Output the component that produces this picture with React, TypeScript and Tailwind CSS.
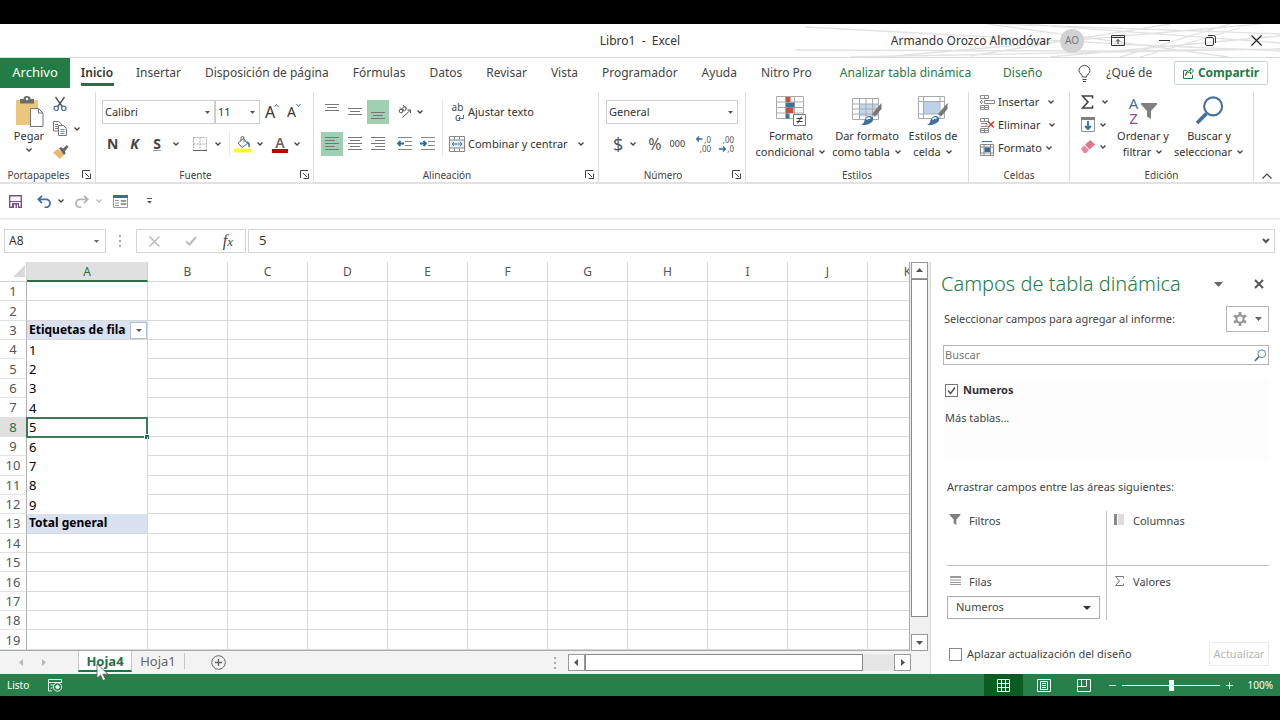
import React, { useState } from 'react';
import clsx from 'clsx';

type IconProps = { className?: string };

const TABS = ['Insertar', 'Disposición de página', 'Fórmulas', 'Datos', 'Revisar', 'Vista', 'Programador', 'Ayuda', 'Nitro Pro'];
const COLUMNS = ['B', 'C', 'D', 'E', 'F', 'G', 'H', 'I', 'J', 'K'];
const ROWS = Array.from({ length: 19 }, (_, i) => i + 1);
const CELLS: Record<number, string> = {
  3: 'Etiquetas de fila', 4: '1', 5: '2', 6: '3', 7: '4', 8: '5', 9: '6', 10: '7', 11: '8', 12: '9', 13: 'Total general',
};

/* ---------- small glyphs ---------- */

function Chevron({ className = 'text-[#444]' }: IconProps) {
  return (
    <svg className={clsx('inline-block h-[6px] w-[8px] shrink-0', className)} viewBox="0 0 8 6" fill="none" stroke="currentColor" strokeWidth="1.3">
      <path d="M1.5 1.5 4 4l2.5-2.5" />
    </svg>
  );
}

function Caret({ className }: IconProps) {
  return (
    <svg className={clsx('shrink-0', className)} viewBox="0 0 8 4" fill="currentColor" preserveAspectRatio="none">
      <path d="M0 0h8L4 4z" />
    </svg>
  );
}

function Launcher() {
  return (
    <button aria-label="Más opciones" className="absolute right-1 bottom-[3px]">
      <svg className="h-[9px] w-[9px]" viewBox="0 0 9 9" fill="none" stroke="#444">
        <path d="M.5 8V.5H8M3 3l4 4M8.5 3.5v5h-5M4.5 8.5h4v-4" />
      </svg>
    </button>
  );
}

function Lines({ rows }: { rows: [number, number, number][] }) {
  return (
    <svg className="h-[18px] w-[16px]" viewBox="0 0 16 18" stroke="#777" fill="none">
      {rows.map(([x, y, w]) => (
        <path key={y} d={`M${x} ${y + 0.5}h${w}`} />
      ))}
    </svg>
  );
}

function Indent({ flip = false }: { flip?: boolean }) {
  return (
    <svg className="h-[14px] w-[16px]" viewBox="0 0 16 14" fill="none" stroke="#888">
      <path d="M1 .5h14M8 4.5h7M8 8.5h7M1 12.5h14" />
      {flip
        ? <path d="M0 6.5h6M3.5 4 6 6.5 3.5 9" stroke="#2e6da4" strokeWidth="1.8" />
        : <path d="M7 6.5H1M3.5 4 1 6.5 3.5 9" stroke="#2e6da4" strokeWidth="1.8" />}
    </svg>
  );
}

function PasteIcon() {
  return (
    <svg className="h-[32px] w-[29px]" viewBox="0 0 29 32" fill="none">
      <path d="M1 4h22v25H1z" fill="#ebc67f" />
      <path d="M5 3h3.5a3.500 3 0 0 1 7 0H19v4.500H5z" fill="#6d6d6d" />
      <circle cx="12" cy="3" r="1.200" fill="#fff" />
      <path d="M15.500 12.500h8l4.500 4.500v13.500H15.500z" fill="#fff" stroke="#777" />
      <path d="M23.500 12.500V17H28" stroke="#777" />
    </svg>
  );
}

function ScissorsIcon() {
  return (
    <svg className="h-[16px] w-[14px]" viewBox="0 0 14 16" fill="none">
      <path d="M2.500 1 9.500 11M11.500 1 4.500 11" stroke="#555" strokeWidth="1.400" />
      <circle cx="3.200" cy="12.300" r="2.200" stroke="#41719c" strokeWidth="1.200" />
      <circle cx="10.800" cy="12.300" r="2.200" stroke="#41719c" strokeWidth="1.200" />
    </svg>
  );
}

function CopyIcon() {
  return (
    <svg className="h-[15px] w-[14px]" viewBox="0 0 14 15" fill="#fff" stroke="#777">
      <path d="M.5.5h5L8.500 3v7h-8z" />
      <path d="M2 3.500h3M2 5.500h3M2 7.500h3" />
      <path d="M5.500 4.500h5l3 3v7h-8z" />
      <path d="M7.500 8.500h4M7.500 10.500h4M7.500 12.500h4" stroke="#7193b3" />
    </svg>
  );
}

function BrushIcon() {
  return (
    <svg className="h-[14px] w-[16px]" viewBox="0 0 16 14">
      <path d="M0 7.500 5 4l6 5.500-4 4.500z" fill="#ebb669" />
      <path d="M6 3.500 8 2l2 1.500 4-3.500 1.500 2-3.500 4 .5 2.500-1.500 1.500z" fill="#666" />
    </svg>
  );
}

function BordersIcon() {
  return (
    <svg className="h-[14px] w-[14px]" viewBox="0 0 14 14" fill="none" stroke="#aaa">
      <path d="M.5.5h13v13M.5.5v13M7 .5v13M.5 7h13" strokeDasharray="2 1" />
      <path d="M0 13.500h14" stroke="#666" />
    </svg>
  );
}

function FillIcon() {
  return (
    <svg className="h-[17px] w-[17px]" viewBox="0 0 17 17" fill="none">
      <path d="m4 7 5.500-4.500 4 5-5.500 4z" stroke="#666" fill="#fff" />
      <path d="M7 5.500V2a1.500 1.500 0 0 1 3 0v4" stroke="#666" />
      <path d="M13 6c2 1 2.500 3 2 5" stroke="#41719c" strokeWidth="1.600" />
      <path d="M0 12.500h17v4H0z" fill="#fdf733" />
    </svg>
  );
}

function OrientationIcon() {
  return (
    <svg className="h-[14px] w-[14px]" viewBox="0 0 14 14" fill="none" stroke="#555">
      <circle cx="3" cy="6" r="1.800" />
      <path d="m2 2.500 4 4" />
      <circle cx="6.500" cy="3.500" r="1.800" />
      <path d="m5 0 3.500 4M4.500 12.500 12.500 5M9.500 5h3v3" />
    </svg>
  );
}

function WrapIcon() {
  return (
    <span className="relative flex w-[13px] flex-col text-[10px] leading-[10px] text-[#444]">
      <span>ab</span>
      <span>c</span>
      <svg className="absolute right-0 bottom-px h-[6px] w-[6px]" viewBox="0 0 6 6" fill="none" stroke="#41719c">
        <path d="M5.500 0v3.500H1M2.500 1.500l-2 2 2 2" />
      </svg>
    </span>
  );
}

function MergeIcon() {
  return (
    <svg className="h-[16px] w-[16px]" viewBox="0 0 16 16" fill="none" stroke="#888">
      <path d="M.5.5h15v15H.5zM5.500.5v3M10.500.5v3M5.500 12.500v3M10.500 12.500v3" />
      <path d="M.5 4h15v8H.5z" fill="#e4edf5" />
      <path d="M3 8h10M5 6 3 8l2 2M11 6l2 2-2 2" stroke="#41719c" />
    </svg>
  );
}

function DecimalIcon({ more = false }: { more?: boolean }) {
  return (
    <span className="relative flex w-[15px] flex-col text-right text-[8px] leading-[9px] text-[#555]">
      <span>{more ? ',0' : ',00'}</span>
      <span>{more ? ',00' : ',0'}</span>
      <svg className={clsx('absolute left-0 h-[6px] w-[7px]', more ? 'top-px' : 'bottom-px')} viewBox="0 0 7 6" fill="none" stroke="#2e6da4" strokeWidth="1.300">
        {more ? <path d="M6.500 3H1M3 .5.7 3 3 5.500" /> : <path d="M0 3h6M4 .5 6.300 3 4 5.500" />}
      </svg>
    </span>
  );
}

function ConditionalIcon() {
  return (
    <svg className="h-[31px] w-[30px]" viewBox="0 0 30 31" fill="none">
      <path d="M.5.5h27v22H.5zM.5 6h27M.5 11.500h27M.5 17h27M9.500.5v22M18.500.5v22" stroke="#aaa" />
      <path d="M10 1h4.500v5H10zM10 12h7.500v5H10z" fill="#c5503c" />
      <path d="M10 6.500h8.500v5H10zM10 17.500h3.500v5H10z" fill="#41719c" />
      <path d="M17.500 18.500h12v11h-12z" fill="#fff" stroke="#777" />
      <path d="M20.500 22.500h6M20.500 25.500h6M25.500 20.500l-4 7" stroke="#333" />
    </svg>
  );
}

function Paintbrush() {
  return (
    <>
      <path d="M20 18 29.500 7v6L23 20.500z" fill="#777" />
      <path d="M9 29c2-1 3-2 3.500-4.500 1-3 3-5 6-4.500 3 1 3.500 4 1.500 6-2.500 2.500-7 3.500-11 3z" fill="#41719c" />
      <path d="M14.500 23.500c1-1.500 3-2 4-1" stroke="#fff" strokeWidth="1.500" />
    </>
  );
}

function TableFormatIcon() {
  return (
    <svg className="h-[31px] w-[30px]" viewBox="0 0 30 31" fill="none">
      <path d="M7.500 8h19v12.500h-19z" fill="#c3d7ea" />
      <path d="M.5 2.500h26v21H.5zM.5 8h26M.5 13h26M.5 18h26M7.500 2.500v21M14 2.500v21M20.500 2.500v21" stroke="#aaa" />
      <Paintbrush />
    </svg>
  );
}

function CellStylesIcon() {
  return (
    <svg className="h-[31px] w-[30px]" viewBox="0 0 30 31" fill="none">
      <path d="M5.500 6h16v12h-16z" fill="#bdd2e8" />
      <path d="M.5.5h26v22H.5zM.5 5.500h26M.5 18h26M5.500.5v22M22 .5v22" stroke="#aaa" />
      <Paintbrush />
    </svg>
  );
}

function CellsIcon({ kind }: { kind: 'insert' | 'delete' | 'format' }) {
  return (
    <svg className="h-[15px] w-[15px]" viewBox="0 0 15 15" fill="none" stroke="#888">
      {kind === 'format' ? (
        <>
          <path d="M.5 3.500h13v11H.5zM4 3.500v11M10.500 3.500v11M.5 6h13M.5 12h13" />
          <path d="M4.500 6.500H10V11H4.500z" fill="#2e6da4" stroke="none" />
          <path d="M2 .5h10M3.500 0 2 1.500M10.500 0 12 1.500" stroke="#41719c" />
        </>
      ) : (
        <>
          <path d="M.5.5h8v3h-8zM.5 10.500h8v4h-8zM4.500.5v3M4.500 10.500v4M.5 12.500h8" />
          {kind === 'insert'
            ? <path d="M4.500 5.500h10v3h-10zM3.500 7H0M2 5 0 7l2 2" />
            : <><path d="M1 5.500h6v3H1" /><path d="m8 3.500 6 6M14 3.500l-6 6" stroke="#c9433a" strokeWidth="1.600" /></>}
        </>
      )}
    </svg>
  );
}

function FunnelIcon({ className }: IconProps) {
  return (
    <svg className={className} viewBox="0 0 16 16" fill="#808080">
      <path d="M0 0h16v1.500L10 8v8l-4-2.500V8L0 1.500z" />
    </svg>
  );
}

function MagnifierIcon({ className }: IconProps) {
  return (
    <svg className={className} viewBox="0 0 28 28" fill="none" stroke="#41719c">
      <circle cx="17.500" cy="10" r="8.700" strokeWidth="2" />
      <path d="M11 17 2 26" strokeWidth="3.500" />
    </svg>
  );
}

function GearIcon() {
  return (
    <svg className="h-[14px] w-[14px]" viewBox="0 0 14 14" fill="none" stroke="#999">
      <circle cx="7" cy="7" r="3.600" strokeWidth="2.200" />
      <path d="M7 0v3M7 11v3M1 3.500l2.500 1.500M10.500 9l2.500 1.500M1 10.500 3.500 9M10.500 5 13 3.500" strokeWidth="2.800" />
    </svg>
  );
}

/* ---------- title, tabs ---------- */

function TitleBar() {
  return (
    <header className="relative flex h-[34px] shrink-0 items-center border-b border-[#dcdcdc] text-xs text-[#333]">
      <svg className="absolute top-0 right-0 h-[33px] w-[490px]" viewBox="0 0 490 33" fill="none" stroke="#e2e2e2" strokeWidth="1.300">
        <path d="M15 3 350 21 490 27M5 26l300 1 185-2M105 32 470 0M60 33l430-8M180 32 380 0M198 0l240 33M210 0l280 10M235 0l255 19M330 33 440 0M350 33 450 4M260 33 490 12" />
      </svg>
      <div className="flex-1" />
      <h1 className="relative whitespace-pre">Libro1  -  Excel</h1>
      <div className="relative flex flex-1 items-center justify-end">
        <span>Armando Orozco Almodóvar</span>
        <span className="ml-[9px] flex h-6 w-6 items-center justify-center rounded-full bg-[#d2d2d2] text-[10px] text-[#777]">AO</span>
        <button aria-label="Opciones de la cinta" className="ml-[11px] flex w-[46px] justify-center">
          <svg className="h-[11px] w-[14px]" viewBox="0 0 14 11" fill="none" stroke="#333"><path d="M.5.5h13v10H.5zM.5 2.500h13M7 9V4.500M5 6.500l2-2 2 2" /></svg>
        </button>
        <button aria-label="Minimizar" className="flex w-[46px] justify-center">
          <svg className="h-[11px] w-[11px]" viewBox="0 0 11 11" stroke="#333"><path d="M0 5.500h11" /></svg>
        </button>
        <button aria-label="Restaurar" className="flex w-[46px] justify-center">
          <svg className="h-[11px] w-[11px]" viewBox="0 0 11 11" fill="none" stroke="#333"><rect x=".5" y="2.500" width="8" height="8" rx="1.500" /><path d="M3 .5h5.500a2 2 0 0 1 2 2V8" /></svg>
        </button>
        <button aria-label="Cerrar" className="mr-px flex w-[46px] justify-center">
          <svg className="h-[11px] w-[11px]" viewBox="0 0 11 11" stroke="#222" strokeWidth="1.200"><path d="m.5.5 10 10M10.500.5l-10 10" /></svg>
        </button>
      </div>
    </header>
  );
}

function TabBar() {
  return (
    <nav className="flex h-[30px] shrink-0 items-center text-xs whitespace-nowrap text-[#444]">
      <button className="h-full w-[70px] shrink-0 bg-[#217c45] text-[13px] text-white">Archivo</button>
      <button className="relative h-full w-[54px] shrink-0 font-semibold text-[#333]">
        Inicio
        <span className="absolute right-[10px] bottom-[2px] left-[11px] h-[3px] bg-[#217346]" />
      </button>
      <div className="flex h-full gap-6 pl-[12px]">
        {TABS.map(t => <button key={t}>{t}</button>)}
      </div>
      <button className="ml-[28px] text-[#217c45]">Analizar tabla dinámica</button>
      <button className="ml-[32px] text-[#217c45]">Diseño</button>
      <label className="ml-9 flex items-center gap-[15px]">
        <svg className="h-[17px] w-[13px]" viewBox="0 0 13 17" fill="none" stroke="#444">
          <path d="M4.500 12C4.500 9.500 1 8.500 1 5.500a5.500 5 0 0 1 11 0c0 3-3.500 4-3.500 6.500zM4.500 14.500h4M5 16.500h3" />
        </svg>
        <span>¿Qué de</span>
      </label>
      <button className="mr-3 ml-auto flex h-6 w-[94px] items-center justify-center gap-1 rounded-xs border border-[#c9d6cf] font-bold text-[#217c45]">
        <svg className="h-[12px] w-[11px]" viewBox="0 0 11 12" fill="none" stroke="#217c45"><path d="M4 3.500H.5v8h9V8M2.500 8.500c0-3 2-5 5-5V1L10.500 4 7.500 7V5c-2.500 0-4 1-5 3.500z" /></svg>
        Compartir
      </button>
    </nav>
  );
}

/* ---------- ribbon ---------- */

function Group({ label, className, launcher = false, children }: { label: string; className: string; launcher?: boolean; children: React.ReactNode }) {
  return (
    <section className={clsx('relative flex flex-col border-r border-[#dadada]', className)}>
      <div className="flex-1">{children}</div>
      <h2 className={clsx('text-center text-[10px] leading-[14px] text-[#444]', launcher && 'pr-[18px]')}>{label}</h2>
      {launcher && <Launcher />}
    </section>
  );
}

function Combo({ label, value, className }: { label: string; value: string; className: string }) {
  return (
    <label className={clsx('relative flex h-[24px] shrink-0 items-center border border-[#cfcfcf] bg-white', className)}>
      <select aria-label={label} defaultValue={value} className="h-full w-full appearance-none bg-transparent pl-[2px] outline-none">
        <option>{value}</option>
      </select>
      <Caret className="pointer-events-none absolute right-1 h-[3px] w-[5px] text-[#555]" />
    </label>
  );
}

function BigButton({ icon, first, second, className }: { icon: React.ReactNode; first: string; second: string; className: string }) {
  return (
    <button className={clsx('flex flex-col items-center leading-4 whitespace-nowrap', className)}>
      <span className="flex h-[32px] items-start">{icon}</span>
      <span>{first}</span>
      <span className="flex items-center gap-1">{second}<Chevron /></span>
    </button>
  );
}

function Ribbon() {
  return (
    <div className="flex h-[96px] shrink-0 border-b-2 border-[#e2e2e2] pt-1 text-[11px] text-[#333]">
      <Group label="Portapapeles" launcher className="w-[96px]">
        <div className="flex pt-1 pl-[13px]">
          <button className="flex w-[32px] flex-col items-center leading-4">
            <PasteIcon />
            <span>Pegar</span>
            <Chevron className="mt-[3px] text-[#444]" />
          </button>
          <div className="ml-2 flex flex-col gap-[9px]">
            <button aria-label="Cortar"><ScissorsIcon /></button>
            <button aria-label="Copiar" className="flex items-center gap-[6px]"><CopyIcon /><Chevron /></button>
            <button aria-label="Copiar formato"><BrushIcon /></button>
          </div>
        </div>
      </Group>

      <Group label="Fuente" launcher className="w-[218px]">
        <div className="flex items-center pt-2 pl-[6px]">
          <Combo label="Fuente" value="Calibri" className="w-[113px]" />
          <Combo label="Tamaño" value="11" className="w-[45px]" />
          <button aria-label="Aumentar tamaño" className="relative ml-[5px] w-[14px] text-left text-base leading-6">A
            <svg className="absolute top-1 right-0 h-[3px] w-[5px]" viewBox="0 0 5 3" fill="none" stroke="#41719c"><path d="M.5 3 2.500.5 4.500 3" /></svg>
          </button>
          <button aria-label="Disminuir tamaño" className="relative ml-[8px] w-[14px] text-left text-sm leading-6">A
            <svg className="absolute top-1 right-0 h-[3px] w-[5px]" viewBox="0 0 5 3" fill="none" stroke="#41719c"><path d="M.5 0 2.500 2.500 4.500 0" /></svg>
          </button>
        </div>
        <div className="flex items-center pt-[8px] pl-[11px] text-[14px] leading-6 font-bold text-[#444]">
          <button aria-label="Negrita" className="w-[11px]">N</button>
          <button aria-label="Cursiva" className="ml-[11px] w-[11px] italic">K</button>
          <button aria-label="Subrayado" className="ml-[12px] w-[10px] underline decoration-[#999]">S</button>
          <Chevron className="ml-[10px] text-[#444]" />
          <button aria-label="Bordes" className="ml-[13px]"><BordersIcon /></button>
          <Chevron className="ml-[7px] text-[#444]" />
          <span className="ml-[7px] h-[24px] w-px bg-[#e8e8e8]" />
          <button aria-label="Color de relleno" className="ml-[4px]"><FillIcon /></button>
          <Chevron className="ml-[5px] text-[#444]" />
          <button aria-label="Color de fuente" className="ml-[8px] w-[16px] border-b-4 border-[#c00000] text-[14px] leading-[13px] font-semibold text-[#666]">A</button>
          <Chevron className="ml-[5px] text-[#444]" />
        </div>
      </Group>

      <Group label="Alineación" launcher className="w-[285px]">
        <div className="flex">
          <div className="flex flex-col gap-2 pt-2 pl-[7px]">
            <div className="flex items-center gap-px">
              <button aria-label="Alinear arriba" className="flex h-[24px] w-[22px] items-center justify-center"><Lines rows={[[1, 1, 14], [3, 4, 10], [1, 7, 14]]} /></button>
              <button aria-label="Alinear al medio" className="flex h-[24px] w-[22px] items-center justify-center"><Lines rows={[[1, 5, 14], [3, 8, 10], [1, 11, 14]]} /></button>
              <button aria-label="Alinear abajo" className="flex h-[24px] w-[22px] items-center justify-center bg-[#9fd0b2]"><Lines rows={[[1, 9, 14], [3, 12, 10], [1, 15, 14]]} /></button>
              <button aria-label="Orientación" className="ml-2 flex items-center gap-1"><OrientationIcon /><Chevron /></button>
            </div>
            <div className="flex items-center gap-px">
              <button aria-label="Izquierda" className="flex h-[24px] w-[22px] items-center justify-center bg-[#9fd0b2]"><Lines rows={[[1, 2, 14], [1, 5, 10], [1, 8, 14], [1, 11, 10], [1, 14, 14]]} /></button>
              <button aria-label="Centrar" className="flex h-[24px] w-[22px] items-center justify-center"><Lines rows={[[1, 2, 14], [3, 5, 10], [1, 8, 14], [3, 11, 10], [1, 14, 14]]} /></button>
              <button aria-label="Derecha" className="flex h-[24px] w-[22px] items-center justify-center"><Lines rows={[[1, 2, 14], [5, 5, 10], [1, 8, 14], [5, 11, 10], [1, 14, 14]]} /></button>
              <button aria-label="Disminuir sangría" className="ml-[7px]"><Indent /></button>
              <button aria-label="Aumentar sangría" className="ml-[6px]"><Indent flip /></button>
            </div>
          </div>
          <div className="mt-2 ml-[6px] flex flex-col gap-2 border-l border-[#e4e4e4] pl-[6px]">
            <button className="flex h-[24px] items-center gap-1 pl-[2px]"><WrapIcon />Ajustar texto</button>
            <button className="flex h-[24px] items-center gap-[3px] whitespace-nowrap"><MergeIcon />Combinar y centrar<Chevron className="ml-[6px] text-[#444]" /></button>
          </div>
        </div>
      </Group>

      <Group label="Número" launcher className="w-[147px]">
        <div className="pt-2 pl-[7px]">
          <Combo label="Formato de número" value="General" className="w-[132px]" />
          <div className="flex items-center pt-2 pl-[7px] leading-6">
            <button className="text-lg leading-6 text-[#555]" aria-label="Moneda">$</button>
            <Chevron className="ml-[6px] text-[#444]" />
            <button className="ml-[11px] text-base leading-6 text-[#555]" aria-label="Porcentaje">%</button>
            <button className="ml-[8px] text-[9px]" aria-label="Millares">000</button>
            <button className="ml-[11px]" aria-label="Más decimales"><DecimalIcon more /></button>
            <button className="ml-[8px]" aria-label="Menos decimales"><DecimalIcon /></button>
          </div>
        </div>
      </Group>

      <Group label="Estilos" className="w-[223px]">
        <div className="flex justify-between px-[8px] pt-1">
          <BigButton icon={<ConditionalIcon />} first="Formato" second="condicional" className="w-[74px]" />
          <BigButton icon={<TableFormatIcon />} first="Dar formato" second="como tabla" className="w-[74px]" />
          <BigButton icon={<CellStylesIcon />} first="Estilos de" second="celda" className="w-[54px]" />
        </div>
      </Group>

      <Group label="Celdas" className="w-[101px]">
        <div className="flex flex-col items-start gap-[5px] pt-px pl-[11px] leading-[18px]">
          <button className="flex items-center gap-[3px]"><CellsIcon kind="insert" />Insertar<Chevron className="ml-[5px] text-[#444]" /></button>
          <button className="flex items-center gap-[3px]"><CellsIcon kind="delete" />Eliminar<Chevron className="ml-[5px] text-[#444]" /></button>
          <button className="flex items-center gap-[3px]"><CellsIcon kind="format" />Formato<Chevron /></button>
        </div>
      </Group>

      <Group label="Edición" className="w-[184px]">
        <div className="flex pl-[11px]">
          <div className="flex flex-col gap-2 pt-[3px]">
            <button aria-label="Autosuma" className="flex items-center gap-[7px]">
              <svg className="h-[14px] w-[13px]" viewBox="0 0 13 14" fill="none" stroke="#444" strokeWidth="1.600"><path d="M11.500 3.500V1H1.500L7 7l-5.500 6h10v-2.500" /></svg>
              <Chevron />
            </button>
            <button aria-label="Rellenar" className="flex items-center gap-1">
              <svg className="h-[15px] w-[14px]" viewBox="0 0 14 15" fill="none"><path d="M.5.5h13v14H.5z" fill="#fff" stroke="#999" /><path d="M0 0h14v3H0z" fill="#808080" /><path d="M7 4v8M4 9l3 3 3-3" stroke="#2e6da4" strokeWidth="1.800" /></svg>
              <Chevron />
            </button>
            <button aria-label="Borrar" className="flex items-center gap-1">
              <svg className="h-[13px] w-[14px]" viewBox="0 0 14 13"><path d="M4 4.500 9.500 0 14 4.500 8.500 9.500z" fill="#e27490" /><path d="M3.300 5.200 7.800 10 5.500 13H3L0 9z" fill="#e9899f" /></svg>
              <Chevron />
            </button>
          </div>
          <BigButton
            className="ml-1 w-[60px] pt-1"
            first="Ordenar y"
            second="filtrar"
            icon={
              <span className="flex items-center gap-[3px]">
                <span className="flex flex-col text-[15px] leading-[15px]"><span className="text-[#41719c]">A</span><span className="text-[#8f4b9e]">Z</span></span>
                <FunnelIcon className="h-[16px] w-[16px]" />
              </span>
            }
          />
          <BigButton className="w-[72px] pt-1" first="Buscar y" second="seleccionar" icon={<MagnifierIcon className="h-[29px] w-[29px]" />} />
        </div>
      </Group>
      <button aria-label="Contraer la cinta" className="ml-2 self-end pb-[3px]">
        <svg className="h-[6px] w-[10px]" viewBox="0 0 10 6" fill="none" stroke="#444" strokeWidth="1.200"><path d="M.5 5.500 5 1l4.500 4.500" /></svg>
      </button>
    </div>
  );
}

function QuickAccess() {
  return (
    <div className="flex h-[36px] shrink-0 items-center border-b-2 border-[#ececec] pl-[9px]">
      <button aria-label="Guardar">
        <svg className="h-[13px] w-[13px]" viewBox="0 0 13 13" fill="none"><path d="M.7.7h11.600v11.600H.7z" stroke="#7a4f94" strokeWidth="1.400" /><path d="M1 6.500h11" stroke="#7a4f94" /><path d="M3 8h7v5H3z" fill="#7a4f94" /><path d="M5 9.500h1.500V13H5zM8 9.500h1V13H8z" fill="#fff" /></svg>
      </button>
      <button aria-label="Deshacer" className="ml-[15px] flex items-center gap-[6px]">
        <svg className="h-[13px] w-[14px]" viewBox="0 0 14 13" fill="none" stroke="#41719c" strokeWidth="1.800"><path d="M5 .8 1.300 4.300 5 8M1.500 4.300H9a4 4 0 0 1 0 8H7.500" /></svg>
        <Chevron />
      </button>
      <button aria-label="Rehacer" className="ml-[10px] flex items-center gap-[6px]">
        <svg className="h-[13px] w-[14px]" viewBox="0 0 14 13" fill="none" stroke="#b5b5b5" strokeWidth="1.800"><path d="M9 .8l3.700 3.500L9 8M12.500 4.300H5a4 4 0 0 0 0 8h1.500" /></svg>
        <Chevron className="text-[#bbb]" />
      </button>
      <button aria-label="Formulario" className="ml-[10px]">
        <svg className="h-[13px] w-[15px]" viewBox="0 0 15 13" fill="none" stroke="#999"><path d="M.5.5h14v12H.5zM2 5.500h4M2 8h4M2 10.500h4M8 5.500h5v1H8zM8 8.500h5v1H8z" /><path d="M0 0h15v3H0z" fill="#3d6a98" stroke="none" /></svg>
      </button>
      <button aria-label="Personalizar barra" className="ml-[19px]">
        <svg className="h-[6px] w-[5px]" viewBox="0 0 5 6" fill="#555"><path d="M0 0h5v1H0zM0 3h5L2.500 5.500z" /></svg>
      </button>
    </div>
  );
}

function FormulaBar() {
  return (
    <div className="flex h-[42px] shrink-0 items-center pr-[5px] pl-1 text-xs text-[#333]">
      <label className="relative flex h-6 w-[102px] items-center border border-[#d4d4d4]">
        <input aria-label="Cuadro de nombres" defaultValue="A8" className="w-full pl-1 outline-none" />
        <Caret className="absolute right-[6px] h-[3px] w-[5px] text-[#666]" />
      </label>
      <svg className="ml-[13px] h-[12px] w-[2px]" viewBox="0 0 2 12" fill="#aaa"><path d="M0 0h2v2H0zM0 5h2v2H0zM0 10h2v2H0z" /></svg>
      <div className="ml-[15px] flex h-6 w-[110px] items-center justify-between border border-[#d4d4d4] pr-3 pl-3">
        <button aria-label="Cancelar"><svg className="h-[11px] w-[11px]" viewBox="0 0 11 11" stroke="#bbb" strokeWidth="1.500"><path d="m.5.5 10 10M10.500.5l-10 10" /></svg></button>
        <button aria-label="Introducir"><svg className="h-[10px] w-[12px]" viewBox="0 0 12 10" fill="none" stroke="#bbb" strokeWidth="2"><path d="m1 5.500 3.500 3L11 1" /></svg></button>
        <button aria-label="Insertar función" className="font-['Liberation_Serif',serif] text-base leading-5 text-[#444] italic">f<span className="text-[13px]">x</span></button>
      </div>
      <label className="ml-[2px] flex h-6 flex-1 items-center border border-[#d4d4d4]">
        <input aria-label="Barra de fórmulas" defaultValue="5" className="w-full pl-[10px] text-[13px] outline-none" />
        <svg className="mr-1 h-[6px] w-[8px]" viewBox="0 0 8 6" fill="none" stroke="#555" strokeWidth="2"><path d="m1 1 3 3 3-3" /></svg>
      </label>
    </div>
  );
}

/* ---------- sheet ---------- */

function Sheet() {
  return (
    <div className="min-h-0 flex-1 overflow-hidden border-r border-b border-[#ababab]">
      <table className="h-full w-[948px] table-fixed border-separate border-spacing-0 text-[13px] leading-[18px] text-black">
        <colgroup>
          <col className="w-[27px]" />
          <col className="w-[121px]" />
          {COLUMNS.map(c => <col key={c} className="w-[80px]" />)}
        </colgroup>
        <thead>
          <tr className="h-[20px] text-xs text-[#555]">
            <th className="border-r border-b border-[#d0d0d0] p-0">
              <svg className="ml-auto h-[13px] w-[13px]" viewBox="0 0 13 13" fill="#d8d8d8"><path d="M12 0v12H0z" /></svg>
            </th>
            <th className="border-r border-b-2 border-r-[#d0d0d0] border-b-[#217346] bg-[#e0e0e0] p-0 leading-[17px] font-normal text-[#217346]">A</th>
            {COLUMNS.map(c => <th key={c} className="border-r border-b border-[#d8d8d8] p-0 font-normal">{c}</th>)}
          </tr>
        </thead>
        <tbody>
          {ROWS.map(r => (
            <tr key={r}>
              <th className={clsx('border-r border-b border-r-[#b0b0b0] border-b-[#e2e2e2] p-0 text-center font-normal', r === 8 ? 'bg-[#e0e0e0] text-[#217346]' : 'text-[#555]')}>{r}</th>
              <td
                className={clsx(
                  'relative border-r border-r-[#d8d8d8] p-0 pl-[2px] whitespace-nowrap',
                  (r < 4 || r > 12) && 'border-b border-b-[#d8d8d8]',
                  (r === 3 || r === 13) && 'bg-[#dae1f1] text-xs font-bold',
                )}
              >
                {CELLS[r]}
                {r === 3 && (
                  <button aria-label="Filtrar" className="absolute top-[1px] right-0 flex h-[17px] w-[17px] items-center justify-center border border-[#b8bfcc] bg-white">
                    <Caret className="h-[3px] w-[6px] text-[#555]" />
                  </button>
                )}
                {r === 8 && (
                  <>
                    <span className="pointer-events-none absolute -inset-px border-2 border-[#3b7a5a]" />
                    <span className="absolute -right-[2px] -bottom-[2px] h-[5px] w-[5px] border-t border-l border-white bg-[#217346]" />
                  </>
                )}
              </td>
              {COLUMNS.map(c => <td key={c} className="border-r border-b border-[#d8d8d8] p-0" />)}
            </tr>
          ))}
        </tbody>
      </table>
    </div>
  );
}

function ScrollButton({ label, path }: { label: string; path: string }) {
  return (
    <button aria-label={label} className="flex h-[17px] w-[17px] shrink-0 items-center justify-center border border-[#999] bg-white">
      <svg className="h-[7px] w-[7px]" viewBox="0 0 7 7" fill="#555"><path d={path} /></svg>
    </button>
  );
}

function SheetTabs() {
  return (
    <div className="relative flex h-[23px] shrink-0 items-center bg-[#f3f3f3] text-[13px] text-[#666]">
      <svg className="ml-[18px] h-[7px] w-[29px]" viewBox="0 0 29 7" fill="#b8b8b8"><path d="M5 0v7L1 3.500zM24 0v7l4-3.500z" /></svg>
      <button className="ml-[31px] h-[21px] w-[54px] self-start border-x border-b-2 border-x-[#c6c6c6] border-b-[#217346] bg-white leading-5 font-bold text-[#217346]">Hoja4</button>
      <button className="mb-1 h-4 w-[53px] border-r border-[#c6c6c6] leading-4">Hoja1</button>
      <button aria-label="Hoja nueva" className="ml-[26px]">
        <svg className="h-[15px] w-[15px]" viewBox="0 0 15 15" fill="none" stroke="#666"><circle cx="7.500" cy="7.500" r="6.800" /><path d="M7.500 4v7M4 7.500h7" strokeWidth="1.300" /></svg>
      </button>
      <svg className="ml-auto h-[12px] w-[2px]" viewBox="0 0 2 12" fill="#aaa"><path d="M0 0h2v2H0zM0 5h2v2H0zM0 10h2v2H0z" /></svg>
      <div className="mr-[19px] ml-[12px] flex w-[343px] bg-[#e6e6e6]">
        <ScrollButton label="Desplazar a la izquierda" path="M5 0v7L1 3.500z" />
        <div className="w-[278px] border border-[#888] bg-white" />
        <div className="flex-1" />
        <ScrollButton label="Desplazar a la derecha" path="M2 0v7l4-3.500z" />
      </div>
      <svg className="absolute top-3 left-[96px] h-[20px] w-[14px]" viewBox="0 0 14 20" fill="#fff" stroke="#555" strokeWidth=".8">
        <path d="M1 .8v14.500l3.500-3.200 2.500 5.500 2.500-1.200-2.500-5.200H12z" />
      </svg>
    </div>
  );
}

/* ---------- field pane ---------- */

function Area({ icon, title, className, children }: { icon: React.ReactNode; title: string; className: string; children?: React.ReactNode }) {
  return (
    <div className={className}>
      <h3 className="flex h-[20px] items-center gap-2 pl-[2px]"><span className="flex w-3 justify-center pb-[3px]">{icon}</span>{title}</h3>
      {children}
    </div>
  );
}

function FieldPane() {
  const [checked, setChecked] = useState(true);
  const [deferred, setDeferred] = useState(false);

  return (
    <aside className="flex w-[350px] shrink-0 flex-col border-l border-[#d6d6d6] pr-[11px] pl-3 text-[11px] text-[#444]">
      <div className="-ml-[2px] flex h-11 items-center">
        <h2 className="flex-1 text-xl font-light whitespace-nowrap text-[#217c45]">Campos de tabla dinámica</h2>
        <button aria-label="Opciones del panel"><Caret className="h-[5px] w-[9px] text-[#666]" /></button>
        <button aria-label="Cerrar panel" className="mr-[5px] ml-[31px]">
          <svg className="h-[10px] w-[10px]" viewBox="0 0 10 10" stroke="#555" strokeWidth="2"><path d="m1 1 8 8M9 1 1 9" /></svg>
        </button>
      </div>
      <div className="flex h-[26px] items-center justify-between pl-[1px]">
        <span>Seleccionar campos para agregar al informe:</span>
        <button aria-label="Herramientas" className="flex h-[26px] w-[43px] items-center justify-center gap-2 border border-[#b5b5b5]"><GearIcon /><Caret className="h-[4px] w-[7px] text-[#666]" /></button>
      </div>
      <label className="mt-[13px] flex h-5 items-center border border-[#b5b5b5] pr-[2px]">
        <input aria-label="Buscar" placeholder="Buscar" className="w-full pl-px outline-none placeholder:text-[#777]" />
        <MagnifierIcon className="h-[13px] w-[13px]" />
      </label>
      <div className="mt-[15px] h-[80px] bg-[#fdfdfd] pl-[2px]">
        <label className="flex h-5 items-center gap-[5px] font-bold text-[#333]">
          <span className="relative flex">
            <input type="checkbox" checked={checked} onChange={e => setChecked(e.target.checked)} className="h-[13px] w-[13px] appearance-none border border-[#777] bg-white" />
            {checked && <svg className="pointer-events-none absolute inset-0 h-[13px] w-[13px]" viewBox="0 0 13 13" fill="none" stroke="#555" strokeWidth="1.500"><path d="m3 6.500 2.500 3 4.500-6" /></svg>}
          </span>
          Numeros
        </label>
        <a href="#" className="mt-2 block leading-5">Más tablas...</a>
      </div>
      <p className="mt-[17px] pl-1 leading-5">Arrastrar campos entre las áreas siguientes:</p>
      <div className="mt-[14px] grid grid-cols-[160px_1fr] pl-1">
        <Area icon={<FunnelIcon className="h-[11px] w-[12px]" />} title="Filtros" className="h-[55px] border-r border-b border-[#c2c2c2]" />
        <Area icon={<svg className="h-[11px] w-[10px]" viewBox="0 0 10 11"><path d="M0 0h3v11H0z" fill="#888" /><path d="M4 0h6v11H4z" fill="#ddd" /></svg>} title="Columnas" className="h-[55px] border-b border-[#c2c2c2] pl-1" />
        <Area icon={<svg className="h-[9px] w-[11px]" viewBox="0 0 11 9" stroke="#999"><path d="M0 1h11" strokeWidth="2" /><path d="M0 4h11M0 6.500h11M0 8.500h11" /></svg>} title="Filas" className="h-[54px] border-r border-[#c2c2c2] pt-[6px]">
          <button className="mt-1 flex h-[23px] w-[153px] items-center justify-between border border-[#ababab] px-2">Numeros<Caret className="h-[4px] w-[8px] text-[#333]" /></button>
        </Area>
        <Area icon={<svg className="h-[10px] w-[9px]" viewBox="0 0 9 10" fill="none" stroke="#777"><path d="M8.500 2.500v-2h-8l4 4.500-4 4.500h8v-2" /></svg>} title="Valores" className="h-[54px] pt-[6px] pl-1" />
      </div>
      <div className="mt-[22px] flex h-6 items-center justify-between pl-[6px]">
        <label className="flex items-center gap-[5px]">
          <input type="checkbox" checked={deferred} onChange={e => setDeferred(e.target.checked)} className="h-[13px] w-[13px] appearance-none border border-[#888] bg-white checked:bg-[#777]" />
          Aplazar actualización del diseño
        </label>
        <button disabled className="h-6 w-[60px] border border-[#ebebeb] text-[#b5b5b5]">Actualizar</button>
      </div>
    </aside>
  );
}

function StatusBar() {
  return (
    <footer className="flex h-[22px] shrink-0 items-center bg-[#277f49] pl-[7px] text-[10px] text-white">
      <span>Listo</span>
      <button aria-label="Grabar macro" className="ml-[19px]">
        <svg className="h-[13px] w-[15px]" viewBox="0 0 15 13" fill="none" stroke="#e6f2ea"><path d="M4 12H.5V.5h13V4M.5 3.500h13M2.500 6h3M2.500 9h2" /><circle cx="9.500" cy="8" r="4.200" /><circle cx="9.500" cy="8" r="1.700" fill="#e6f2ea" /></svg>
      </button>
      <div className="ml-auto flex h-full items-center">
        <button aria-label="Normal" className="flex h-full w-[39px] items-center justify-center bg-[#0b5c20]">
          <svg className="h-[13px] w-[13px]" viewBox="0 0 13 13" fill="none" stroke="#fff"><path d="M.5.5h12v12H.5zM4.500.5v12M8.500.5v12M.5 4.500h12M.5 8.500h12" /></svg>
        </button>
        <button aria-label="Diseño de página" className="flex w-[41px] justify-center">
          <svg className="h-[13px] w-[14px]" viewBox="0 0 14 13" fill="none" stroke="#fff"><path d="M.5.5h13v12H.5zM3.500 2.500h7v8h-7zM5 4.500h4M5 6.500h4M5 8.500h4" /></svg>
        </button>
        <button aria-label="Salto de página" className="flex w-[39px] justify-center">
          <svg className="h-[13px] w-[14px]" viewBox="0 0 14 13" fill="none" stroke="#fff"><path d="M.5.5h13v12H.5zM4.500.5v7M.5 7.500h9V.5" /></svg>
        </button>
        <button aria-label="Alejar" className="ml-[6px] flex"><svg className="h-[7px] w-[7px]" viewBox="0 0 7 7" stroke="#cfe5d7"><path d="M0 3.500h7" /></svg></button>
        <input
          type="range"
          aria-label="Zoom"
          defaultValue={50}
          className="mx-[6px] h-[11px] w-[98px] appearance-none bg-[linear-gradient(#fff,#fff)] bg-[length:100%_1px] bg-center bg-no-repeat [&::-webkit-slider-thumb]:h-[11px] [&::-webkit-slider-thumb]:w-[5px] [&::-webkit-slider-thumb]:appearance-none [&::-webkit-slider-thumb]:bg-white"
        />
        <button aria-label="Acercar" className="flex"><svg className="h-[7px] w-[7px]" viewBox="0 0 7 7" stroke="#cfe5d7"><path d="M0 3.500h7M3.500 0v7" /></svg></button>
        <span className="w-[47px] pr-[7px] text-right">100%</span>
      </div>
    </footer>
  );
}

export default function App() {
  return (
    <div className="flex h-screen flex-col overflow-hidden bg-black py-6 font-['Noto_Sans','Open_Sans',sans-serif]">
      <div className="flex min-h-0 flex-1 flex-col bg-white">
        <TitleBar />
        <TabBar />
        <Ribbon />
        <QuickAccess />
        <FormulaBar />
        <div className="flex min-h-0 flex-1">
          <main className="flex min-w-0 flex-1 flex-col">
            <div className="flex min-h-0 flex-1">
              <Sheet />
              <div className="flex w-[20px] shrink-0 flex-col bg-[#f0f0f0] pr-[2px] pl-[1px]">
                <ScrollButton label="Desplazar hacia arriba" path="M0 5h7L3.500 1z" />
                <div className="h-[338px] border border-[#888] bg-white" />
                <div className="flex-1" />
                <ScrollButton label="Desplazar hacia abajo" path="M0 2h7L3.500 6z" />
              </div>
            </div>
            <SheetTabs />
          </main>
          <FieldPane />
        </div>
        <StatusBar />
      </div>
    </div>
  );
}
